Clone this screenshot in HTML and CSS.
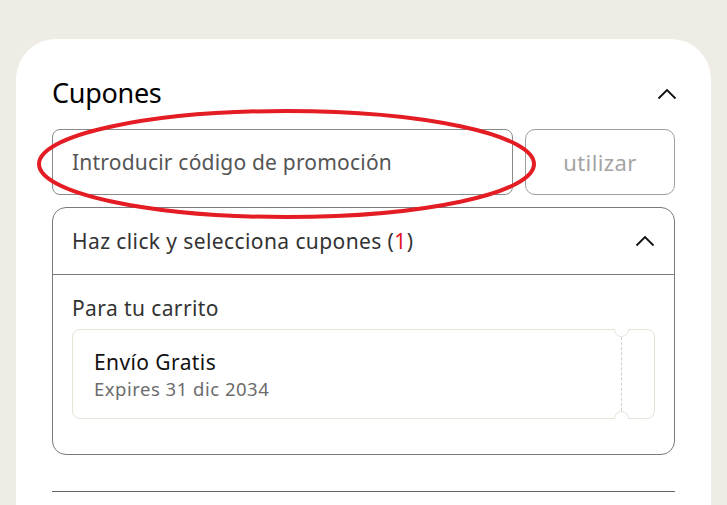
FILE: index.html
```html
<!DOCTYPE html>
<html lang="es">
<head>
<meta charset="utf-8">
<link rel="stylesheet" href="styles.css">
</head>
<body>
<main class="card">
  <div class="title-row">
    <h2 class="title">Cupones</h2>
    <svg class="chev" width="20" height="12" viewBox="0 0 20 12"><path d="M1.5 10.5 L10 2 L18.5 10.5" fill="none" stroke="#111" stroke-width="1.8"/></svg>
  </div>
  <div class="promo-row">
    <div class="promo-input">Introducir código de promoción</div>
    <button class="promo-btn">utilizar</button>
    <svg class="annot" width="504" height="114" viewBox="0 0 504 114"><ellipse cx="250.5" cy="57" rx="247.5" ry="53" fill="none" stroke="#e41c23" stroke-width="4"/></svg>
  </div>
  <section class="coupons">
    <div class="coupons-head">
      <span>Haz click y selecciona cupones (<span class="red">1</span>)</span>
      <svg class="chev" width="20" height="12" viewBox="0 0 20 12"><path d="M1.5 10.5 L10 2 L18.5 10.5" fill="none" stroke="#111" stroke-width="1.8"/></svg>
    </div>
    <div class="coupons-body">
      <div class="group-label">Para tu carrito</div>
      <div class="ticket">
        <div class="ticket-main">
          <div class="ticket-name">Envío Gratis</div>
          <div class="ticket-exp">Expires 31 dic 2034</div>
        </div>
        <div class="ticket-stub"></div>
        <span class="notch notch-top"></span>
        <span class="notch notch-bot"></span>
      </div>
    </div>
  </section>
  <hr class="divider">
</main>
</body>
</html>
```
FILE: styles.css
```css
html, body {
  margin: 0;
  padding: 0;
  background: #efebe5;
  height: 505px;
  overflow: hidden;
}
body {
  font-family: "Noto Sans", "Open Sans", sans-serif;
  color: #111;
  padding: 39px 16px 0 16px;
}
.card {
  background: #fff;
  border-radius: 40px 40px 0 0;
  padding: 35px 36px 40px 36px;
  min-height: 500px;
}
.title-row {
  display: flex;
  justify-content: space-between;
  align-items: center;
  height: 36px;
}
.title {
  margin: 0;
  font-size: 27px;
  font-weight: 400;
  letter-spacing: -0.3px;
  color: #000;
}
.title-row .chev { margin-right: -2px; margin-top: 4px; }
.promo-row {
  position: relative;
  display: flex;
  gap: 12px;
  margin-top: 19px;
  height: 66px;
}
.promo-input {
  flex: 1;
  border: 1px solid #8a8a8a;
  border-radius: 8px;
  display: flex;
  align-items: center;
  padding-left: 19px;
  font-size: 21px;
  letter-spacing: 0.2px;
  color: #555;
}
.promo-btn {
  width: 150px;
  border: 1px solid #a0a0a0;
  border-radius: 10px;
  background: #fff;
  font-family: inherit;
  font-size: 22px;
  letter-spacing: 0.4px;
  color: #a4a4a4;
  padding: 0;
}
.annot {
  position: absolute;
  left: -16px;
  top: -22px;
  pointer-events: none;
}
.coupons {
  margin-top: 12px;
  border: 1px solid #7a7a7a;
  border-radius: 14px;
}
.coupons-head {
  height: 66px;
  border-bottom: 1px solid #7a7a7a;
  display: flex;
  align-items: center;
  justify-content: space-between;
  padding: 0 19px 0 19px;
  font-size: 21px;
  letter-spacing: 0.4px;
  color: #333;
}
.red { color: #e4141e; }
.coupons-body {
  padding: 20px 19px 35px 19px;
}
.group-label {
  font-size: 21px;
  letter-spacing: 0.4px;
  color: #333;
  line-height: 26px;
}
.ticket {
  position: relative;
  margin-top: 8px;
  height: 88px;
  border: 1px solid #e6e2d8;
  border-radius: 8px;
  display: flex;
}
.ticket-main {
  flex: 1;
  padding: 18px 0 0 21px;
}
.ticket-name {
  font-size: 21px;
  letter-spacing: 0.4px;
  color: #111;
  line-height: 28px;
}
.ticket-exp {
  font-size: 18.5px;
  letter-spacing: 0.5px;
  color: #6c6c6c;
  line-height: 26px;
  margin-top: 0;
}
.ticket-stub {
  width: 32px;
  border-left: 1px dashed #cfcfcf;
  margin: 7px 0;
}
.notch {
  position: absolute;
  right: 25px;
  width: 13px;
  height: 13px;
  border-radius: 50%;
  background: #fff;
  border: 1px solid #e6e2d8;
}
.notch-top { top: -8px; clip-path: inset(7px 0 0 0); }
.notch-bot { bottom: -8px; clip-path: inset(0 0 7px 0); }
.divider {
  margin: 36px 0 0 0;
  border: 0;
  border-top: 1px solid #666;
}
```
